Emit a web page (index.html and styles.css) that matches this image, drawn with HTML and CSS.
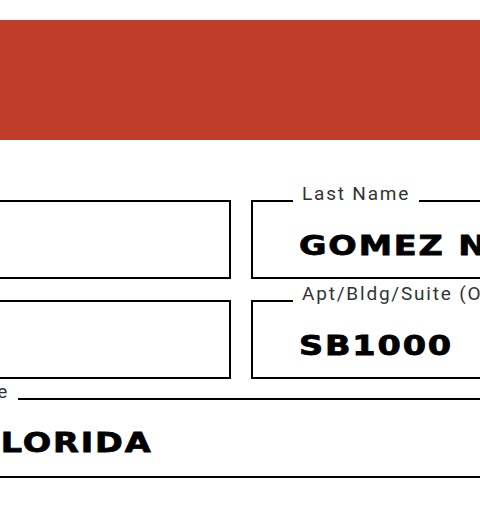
FILE: index.html
```html
<!DOCTYPE html>
<html lang="en">
<head>
<meta charset="utf-8">
<title>Address form</title>
<link rel="stylesheet" href="styles.css">
</head>
<body>
<div class="page">
  <header class="banner"></header>
  <form class="form">
    <div class="form-grid">
      <div class="field">
        <span class="field-label">First Name</span>
        <span class="field-value"></span>
      </div>
      <div class="field">
        <span class="field-label">Last Name</span>
        <span class="field-value">GOMEZ NAVARRO</span>
      </div>
      <div class="field">
        <span class="field-label">Street Address</span>
        <span class="field-value"></span>
      </div>
      <div class="field">
        <span class="field-label">Apt/Bldg/Suite (Optional)</span>
        <span class="field-value">SB1000</span>
      </div>
    </div>
    <div class="form-row">
      <div class="field field--wide">
        <span class="field-label field-label--state">State</span>
        <span class="field-value">FLORIDA</span>
      </div>
    </div>
  </form>
</div>
</body>
</html>
```
FILE: styles.css
```css
html, body {
  margin: 0;
  padding: 0;
  background: #fff;
}

.page {
  width: 480px;
  height: 506px;
  overflow: hidden;
}

.banner {
  margin-top: 20px;
  height: 120px;
  background: #c03d2c;
}

.form {
  margin-top: 60px;
}

.form-grid {
  display: grid;
  grid-template-columns: 480px 300px;
  grid-auto-rows: 79px;
  column-gap: 20px;
  row-gap: 21px;
  margin-left: -249px;
}

.form-row {
  margin: 19px -72px 0 -72px;
}

.field {
  position: relative;
  box-sizing: border-box;
  height: 79px;
  border: 2px solid #000;
  padding: 28px 0 0 46px;
}

.field--wide {
  height: 80px;
  padding-top: 27px;
}

.field-label {
  position: absolute;
  top: -18px;
  left: 40px;
  padding: 0 9px;
  background: #fff;
  font-family: Roboto, "Liberation Sans", sans-serif;
  font-size: 19px;
  line-height: 20px;
  letter-spacing: 1.8px;
  color: #333;
  white-space: nowrap;
}

.field-label--state {
  left: 17px;
}

.field-value {
  display: inline-block;
  font-family: "DejaVu Sans", sans-serif;
  font-weight: 700;
  font-size: 27px;
  line-height: 32px;
  letter-spacing: 1.5px;
  color: #000;
  -webkit-text-stroke: 0.8px #000;
  white-space: nowrap;
  transform: scaleX(1.24);
  transform-origin: left center;
}
```
